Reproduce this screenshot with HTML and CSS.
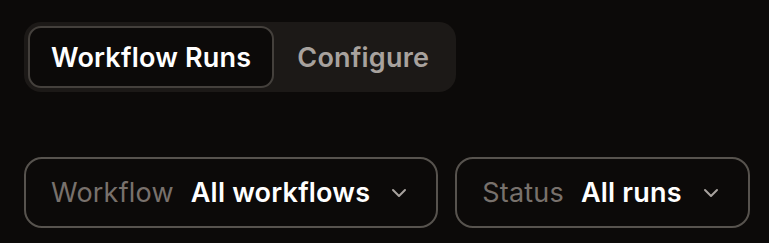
FILE: index.html
```html
<!DOCTYPE html>
<html lang="en">
<head>
<meta charset="utf-8">
<title>Workflow Runs</title>
<link rel="stylesheet" href="styles.css">
</head>
<body>
<div class="page">
  <div class="tabs">
    <button class="tab tab-active">Workflow Runs</button>
    <button class="tab">Configure</button>
  </div>
  <div class="filters">
    <button class="select select-workflow">
      <span class="select-label">Workflow</span>
      <span class="select-value">All workflows</span>
      <svg class="chevron" width="16" height="10" viewBox="0 0 16 10" fill="none"><path d="M2 2 L8 8 L14 2" stroke="currentColor" stroke-width="2" stroke-linecap="round" stroke-linejoin="round"/></svg>
    </button>
    <button class="select select-status">
      <span class="select-label">Status</span>
      <span class="select-value">All runs</span>
      <svg class="chevron" width="16" height="10" viewBox="0 0 16 10" fill="none"><path d="M2 2 L8 8 L14 2" stroke="currentColor" stroke-width="2" stroke-linecap="round" stroke-linejoin="round"/></svg>
    </button>
  </div>
</div>
</body>
</html>
```
FILE: styles.css
```css
html, body {
  margin: 0;
  padding: 0;
  background: #0c0a09;
}
body {
  font-family: Inter, "Noto Sans", sans-serif;
  color: #fafaf9;
}
.page {
  padding: 22px 24px;
  display: flex;
  flex-direction: column;
  align-items: flex-start;
  gap: 65px;
}
button {
  font-family: inherit;
  cursor: pointer;
  white-space: nowrap;
  flex-shrink: 0;
}
.tabs {
  display: flex;
  padding: 4px;
  background: #1c1917;
  border-radius: 17px;
}
.tab {
  height: 62px;
  padding: 0 21px;
  border: 2px solid transparent;
  border-radius: 13px;
  background: transparent;
  color: #a8a29e;
  font-size: 27px;
  font-weight: 600;
  letter-spacing: 0.2px;
}
.tab-active {
  background: #0c0a09;
  border-color: #44403c;
  color: #ffffff;
}
.filters {
  display: flex;
  gap: 17px;
}
.select {
  display: flex;
  align-items: center;
  height: 71px;
  padding: 0 29px 0 25px;
  border: 2px solid #57534e;
  border-radius: 18px;
  background: #0c0a09;
  font-size: 27px;
  letter-spacing: 0.2px;
}
.select-label {
  color: #78716c;
  font-weight: 400;
  margin-right: 17px;
}
.select-value {
  color: #ffffff;
  font-weight: 600;
  margin-right: 21px;
}
.chevron {
  color: #a8a29e;
  display: block;
  flex-shrink: 0;
}
```
